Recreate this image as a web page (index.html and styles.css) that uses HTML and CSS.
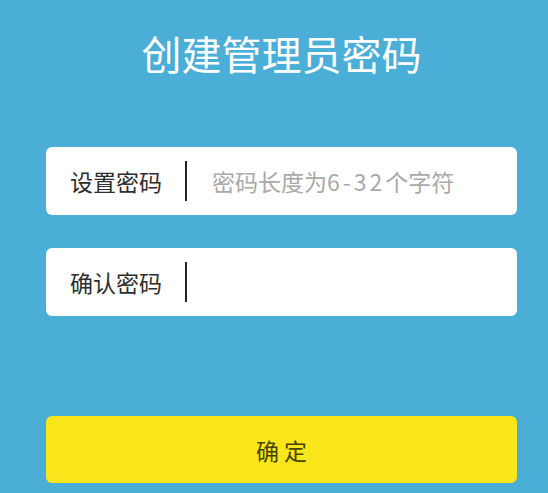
FILE: index.html
```html
<!DOCTYPE html>
<html lang="zh-CN">
<head>
<meta charset="utf-8">
<title>创建管理员密码</title>
<link rel="stylesheet" href="styles.css">
</head>
<body>
<main class="page">
  <h1 class="title">创建管理员密码</h1>
  <div class="field first">
    <span class="label">设置密码</span>
    <span class="cursor"></span>
    <span class="placeholder">密码长度为<span class="digits">6-32</span>个字符</span>
  </div>
  <div class="field second">
    <span class="label">确认密码</span>
    <span class="cursor"></span>
  </div>
  <div class="button">确 定</div>
</main>
</body>
</html>
```
FILE: styles.css
```css
html, body {
  margin: 0;
  padding: 0;
}
body {
  background: #4aaed7;
  font-family: "Noto Sans CJK SC", "Noto Sans", sans-serif;
  width: 548px;
  height: 493px;
  overflow: hidden;
}
.page {
  display: flex;
  flex-direction: column;
  padding: 0 31px 0 46px;
}
.title {
  margin: 24px 0 0;
  font-size: 40px;
  line-height: 58px;
  font-weight: 400;
  color: #ffffff;
  text-align: center;
  letter-spacing: 0;
}
.field {
  height: 68px;
  background: #ffffff;
  border-radius: 6px;
  display: flex;
  align-items: center;
  padding-left: 24px;
}
.first {
  margin-top: 65px;
}
.second {
  margin-top: 33px;
}
.label {
  font-size: 23px;
  color: #2e2e2e;
  width: 92px;
}
.cursor {
  width: 2px;
  height: 40px;
  background: #222;
  margin-left: 23px;
}
.placeholder {
  margin-left: 25px;
  font-size: 23px;
  color: #a9a9a9;
}
.digits {
  letter-spacing: 3px;
}
.button {
  margin-top: 100px;
  height: 67px;
  background: #fbe61c;
  border-radius: 6px;
  display: flex;
  align-items: center;
  justify-content: center;
  font-size: 23px;
  color: #4a4300;
  white-space: pre;
}
```
